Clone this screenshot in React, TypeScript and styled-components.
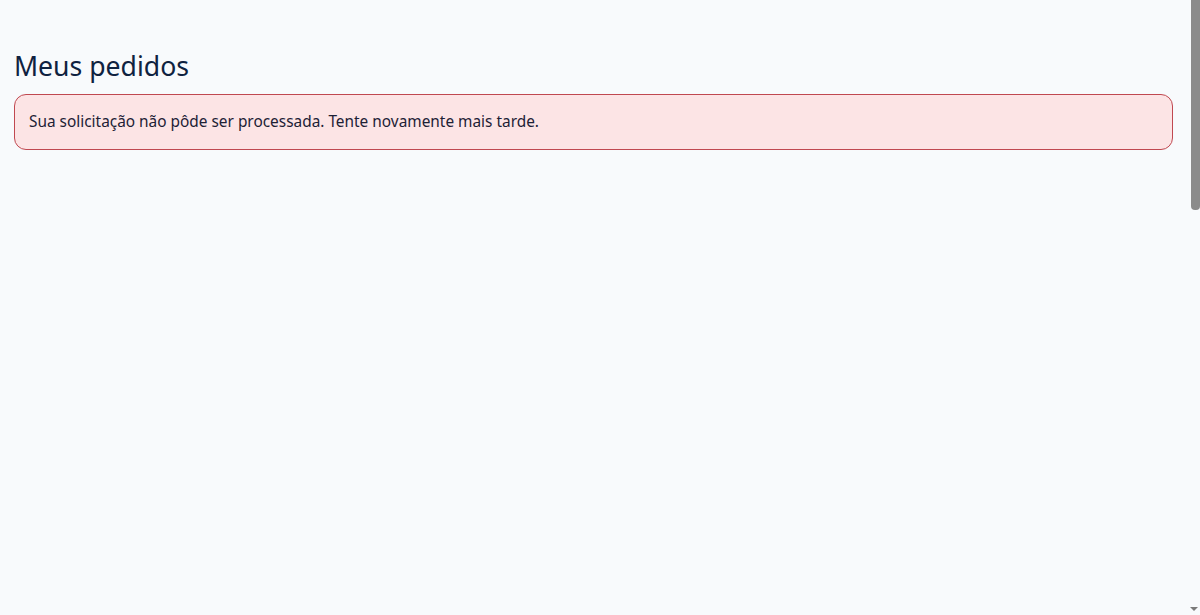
import React from "react";
import styled, { createGlobalStyle } from "styled-components";

const GlobalStyle = createGlobalStyle`
  html, body {
    height: 100%;
    overflow: hidden;
  }
  body {
    margin: 0;
    background: #f8fafc;
    font-family: "Noto Sans", "Open Sans", sans-serif;
  }
`;

const Page = styled.main`
  box-sizing: border-box;
  padding: 48px 27px 0 14px;
  display: flex;
  flex-direction: column;
  gap: 10px;
`;

const Title = styled.h1`
  margin: 0;
  font-size: 26.6px;
  font-weight: 400;
  line-height: 36px;
  color: #0f2240;
`;

const Alert = styled.div`
  background: #fce4e5;
  border: 1px solid #c04850;
  border-radius: 12px;
  padding: 15px 14px;
  font-size: 15.4px;
  line-height: 24px;
  color: #1d2135;
`;

const ScrollThumb = styled.div`
  position: fixed;
  top: 0;
  right: 0;
  width: 9px;
  height: 210px;
  background: #8b8b8b;
  border-radius: 0 0 4px 4px;
`;

const ScrollArrow = styled.div`
  position: fixed;
  right: 2px;
  bottom: 4px;
  width: 0;
  height: 0;
  border-left: 4px solid transparent;
  border-right: 4px solid transparent;
  border-top: 4px solid #7a7a7a;
`;

export default function App() {
  return (
    <>
      <GlobalStyle />
      <Page>
        <Title>Meus pedidos</Title>
        <Alert>Sua solicitação não pôde ser processada. Tente novamente mais tarde.</Alert>
      </Page>
      <ScrollThumb />
      <ScrollArrow />
    </>
  );
}
